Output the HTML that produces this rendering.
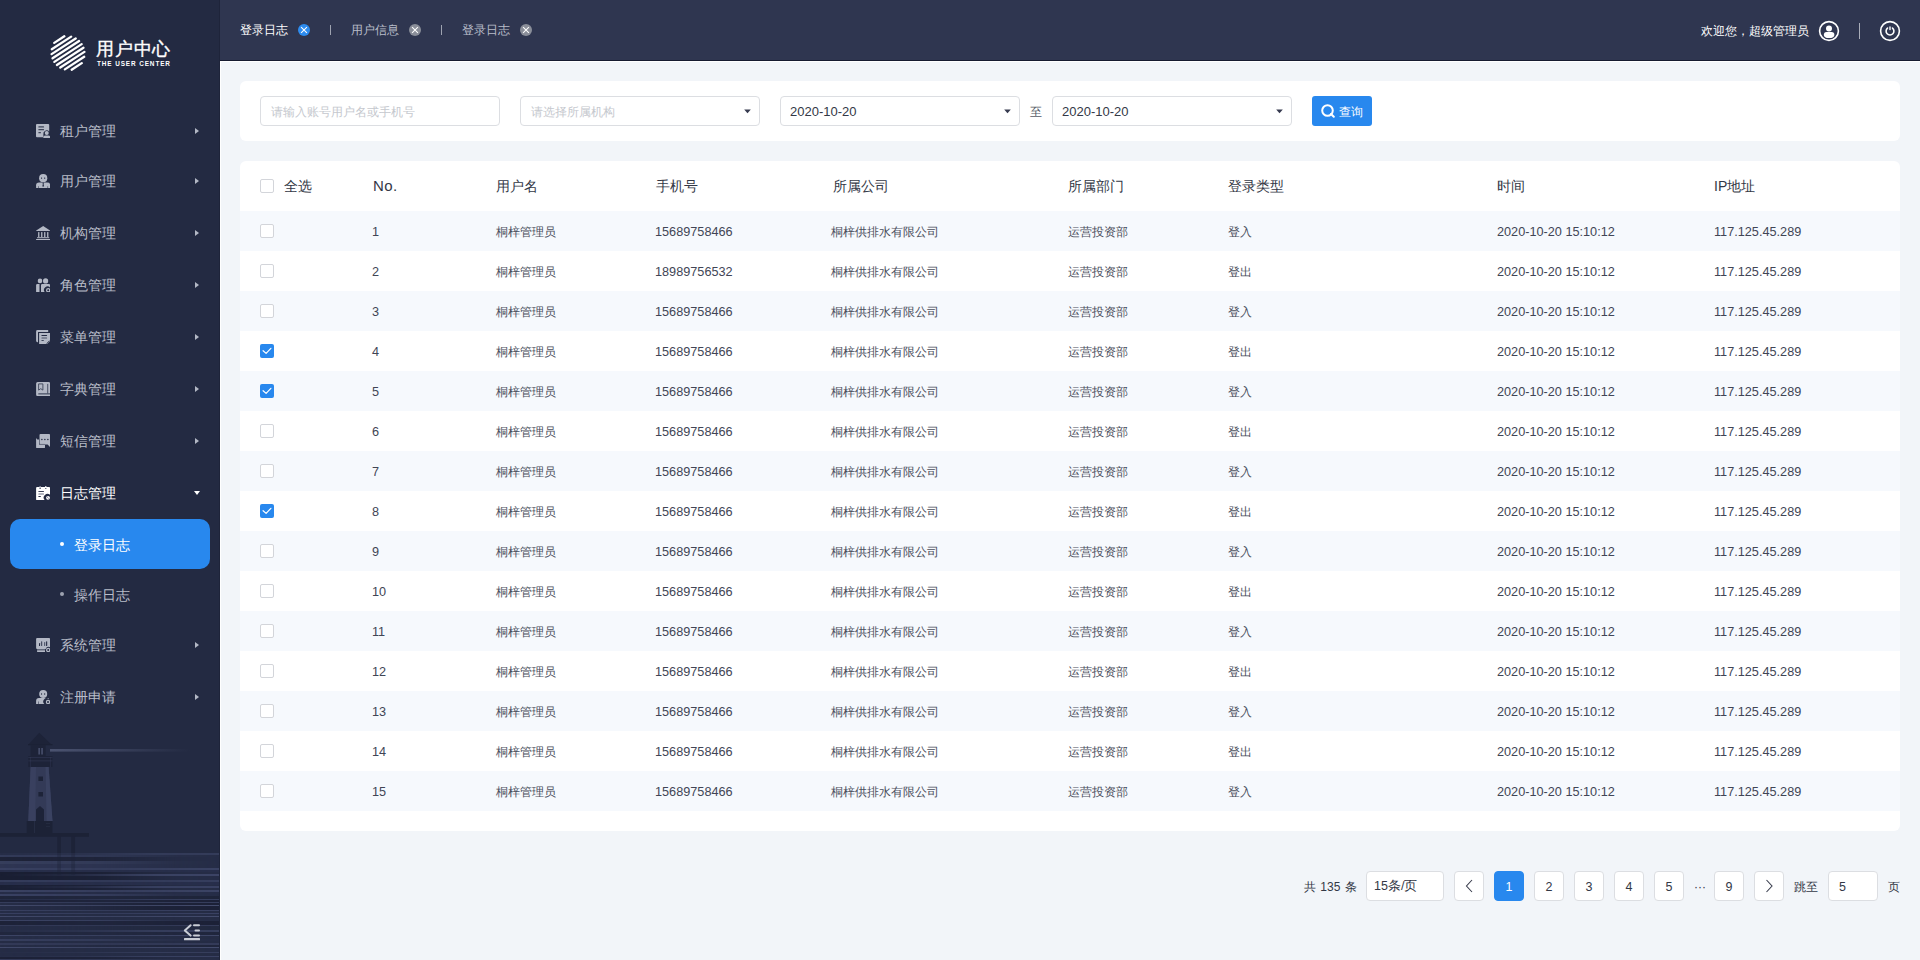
<!DOCTYPE html>
<html lang="zh"><head><meta charset="utf-8"><title>登录日志</title>
<style>
*{box-sizing:border-box;margin:0;padding:0}
html,body{width:1920px;height:960px;overflow:hidden;background:#f2f5f9;font-family:"Liberation Sans", sans-serif;}
.side{position:absolute;left:0;top:0;width:220px;height:960px;background:#232a42;overflow:hidden;border-right:1px solid #1e243a}
.lt{position:absolute;left:96px;top:37px;-webkit-text-stroke:0.35px #fff;font-size:18.2px;letter-spacing:.8px;line-height:24px;color:#fff;white-space:nowrap}
.ls{position:absolute;left:97px;top:60px;font-size:6.4px;line-height:8px;color:#fff;font-weight:bold;letter-spacing:0.9px;white-space:nowrap}
.mi{position:absolute;left:0;width:220px;height:40px}
.mi .ic{position:absolute;left:36px;top:13px;width:14px;height:14px;display:block}
.mi .ic svg{display:block}
.mi .mt{position:absolute;left:60px;top:0;line-height:40px;font-size:14px;color:#b9bdc9;white-space:nowrap}
.mi.act .mt{color:#fff}
.arr{position:absolute;left:195px;top:16.5px;width:0;height:0;border-top:3.5px solid transparent;border-bottom:3.5px solid transparent;border-left:4px solid #b3b8c5}
.arr.down{left:194px;top:18px;border-left:3.5px solid transparent;border-right:3.5px solid transparent;border-top:4px solid #fff;border-bottom:0}
.subact{position:absolute;left:10px;top:519px;width:200px;height:50px;border-radius:10px;background:#2888ee}
.sub{position:absolute;left:10px;top:569px;width:200px;height:50px}
.dot{position:absolute;left:50px;top:23px;width:4px;height:4px;border-radius:50%;background:#fff}
.sub .dot{background:#9da2b0}
.st{position:absolute;left:64px;top:1px;line-height:50px;font-size:14px;color:#fff;white-space:nowrap}
.sub .st{color:#b9bdc9}
.hdr{position:absolute;left:220px;top:0;width:1700px;height:61px;background:#2f3650;border-bottom:1px solid #161b30}
.tab{position:absolute;top:0;height:60px}
.tt{position:absolute;left:0;top:0;line-height:60px;font-size:12px;color:#b9bdc9;white-space:nowrap}
.tab.act .tt{color:#fff}
.tc{position:absolute;left:58px;top:24px;width:12px;height:12px}
.tc svg{display:block}
.tsep{position:absolute;top:25px;width:1px;height:10px;background:#9ea3b0}
.welcome{position:absolute;left:1481px;top:1px;line-height:60px;font-size:12px;color:#fff;white-space:nowrap}
.hsep{position:absolute;left:1639px;top:23px;width:1px;height:16px;background:#a9adb9}
.content-line{position:absolute;left:220px;top:61px;width:1px;height:899px;background:#fff}
.content-line2{position:absolute;left:220px;top:61px;width:1700px;height:1px;background:#fff}
.card{position:absolute;background:#fff;border-radius:6px}
.sc{left:240px;top:81px;width:1660px;height:60px}
.inp{position:absolute;top:15px;width:240px;height:30px;border:1px solid #dcdee2;border-radius:4px;background:#fff}
.ph{position:absolute;left:10px;top:1px;line-height:28px;font-size:12px;color:#c5c8ce;white-space:nowrap}
.val{position:absolute;left:9px;top:1px;line-height:28px;font-size:13px;color:#333846;white-space:nowrap}
.dd{position:absolute;left:223px;top:12.4px;width:7px;height:5px}
.dd svg{display:block}
.zhi{position:absolute;left:790px;top:16px;line-height:30px;font-size:12px;color:#555a66}
.btn{position:absolute;left:1072px;top:15px;width:60px;height:30px;border-radius:3px;background:#2888ee;color:#fff;font-size:12px}
.btn svg{position:absolute;left:9px;top:8px}
.btn span{position:absolute;left:27px;top:1px;line-height:30px}
.tb{left:240px;top:161px;width:1660px;height:670px;overflow:hidden}
.thr{position:absolute;left:0;top:0;width:1660px;height:50px}
.th{position:absolute;top:0;line-height:50px;font-size:14px;color:#333846;white-space:nowrap}
.th.no{font-size:15px;letter-spacing:.4px}
.tr{position:absolute;left:0;width:1660px;height:40px;background:#fff}
.tr.odd{background:#f6f9fd}
.td{position:absolute;top:1px;line-height:40px;font-size:12px;color:#4a4e5c;white-space:nowrap}
.td.n{font-size:12.7px;color:#414555}
.cb{position:absolute;left:20px;width:14px;height:14px;border:1px solid #d3d5da;border-radius:2px;background:#fff}
.thr .cb{top:18px}
.tr .cb{top:13px}
.cb.on{border:0;background:transparent}
.cb svg{display:block}
.ptxt{position:absolute;top:872px;word-spacing:1px;line-height:30px;font-size:12px;color:#333846;white-space:nowrap}
.pbox{position:absolute;top:871px;width:30px;height:30px;border:1px solid #dcdee2;border-radius:4px;background:#fff;font-size:12.5px;color:#333846;line-height:30px}
.pbtn{text-align:center}
.pbtn svg{display:inline-block;vertical-align:middle;margin-top:-3px}
.pbox.cur{background:#2888ee;border-color:#2888ee;color:#fff}
</style></head>
<body>

<div class="side">
  <div class="logo">
    <svg width="36" height="36" viewBox="0 0 36 36" style="position:absolute;left:50px;top:35px">
      <g stroke="#fff" stroke-width="2.3" stroke-linecap="round"><line x1="4.23" y1="7.87" x2="14.34" y2="1.30"/><line x1="1.76" y1="14.24" x2="21.17" y2="1.63"/><line x1="1.59" y1="19.12" x2="25.70" y2="3.46"/><line x1="2.54" y1="23.27" x2="29.11" y2="6.02"/><line x1="4.33" y1="26.88" x2="31.67" y2="9.12"/><line x1="6.89" y1="29.98" x2="33.46" y2="12.73"/><line x1="10.30" y1="32.54" x2="34.41" y2="16.88"/><line x1="14.83" y1="34.37" x2="34.24" y2="21.76"/><line x1="21.66" y1="34.70" x2="31.77" y2="28.13"/></g>
    </svg>
    <div class="lt">用户中心</div>
    <div class="ls">THE USER CENTER</div>
  </div>
  <div class="mi" style="top:111px"><span class="ic"><svg width="14" height="14" viewBox="0 0 14 14"><path d="M1 0 H12.2 Q13.2 0 13.2 1 V7.6 A3.3 3.3 0 0 0 7.4 10.3 V13.2 H1 Q0 13.2 0 12.2 V1 Q0 0 1 0Z" fill="#b3b8c5"/><rect x="2.3" y="2.3" width="5.8" height="1.2" rx=".6" fill="#3d4459"/><rect x="2.3" y="5.1" width="5.8" height="1.2" rx=".6" fill="#3d4459"/><rect x="2.3" y="8.1" width="2.7" height="1.2" rx=".6" fill="#3d4459"/><circle cx="10.75" cy="9" r="2" fill="#b3b8c5"/><path d="M7.3 14.2 V13.2 Q7.3 11.6 9 11.6 H12.5 Q14.2 11.6 14.2 13.2 V14.2Z" fill="#b3b8c5"/></svg></span><span class="mt">租户管理</span><span class="arr"></span></div><div class="mi" style="top:161px"><span class="ic"><svg width="14" height="14" viewBox="0 0 14 14"><circle cx="7.2" cy="4.2" r="4.1" fill="#b3b8c5"/><ellipse cx="5.6" cy="4.2" rx=".55" ry=".9" fill="#3d4459"/><ellipse cx="8.7" cy="4.2" rx=".55" ry=".9" fill="#3d4459"/><path d="M0.1 14.2 V11.3 Q0.1 8.6 3 8.6 H11.3 Q14.2 8.6 14.2 11.3 V14.2Z" fill="#b3b8c5"/><path d="M6.5 8.6 H7.9 L7.6 10.2 L8.1 12.6 H6.3 L6.8 10.2Z" fill="#232a42"/><rect x="2.4" y="12.2" width=".6" height="2" fill="#3d4459"/><rect x="11.5" y="12.2" width=".6" height="2" fill="#3d4459"/></svg></span><span class="mt">用户管理</span><span class="arr"></span></div><div class="mi" style="top:213px"><span class="ic"><svg width="14" height="14" viewBox="0 0 14 14"><path d="M7.2 0.1 L14.2 4.6 V5.1 H0.2 V4.6 Z" fill="#b3b8c5"/><rect x="2.1" y="6.1" width="1.3" height="5" fill="#b3b8c5"/><rect x="5.1" y="6.1" width="1.3" height="5" fill="#b3b8c5"/><rect x="8.1" y="6.1" width="1.3" height="5" fill="#b3b8c5"/><rect x="11.1" y="6.1" width="1.3" height="5" fill="#b3b8c5"/><rect x="1.1" y="11.2" width="12.1" height="1" fill="#b3b8c5"/><rect x="0.1" y="13" width="14.1" height="1.2" fill="#b3b8c5"/></svg></span><span class="mt">机构管理</span><span class="arr"></span></div><div class="mi" style="top:265px"><span class="ic"><svg width="14" height="14" viewBox="0 0 14 14"><circle cx="4" cy="2.9" r="2.3" fill="#b3b8c5"/><circle cx="9.6" cy="2.9" r="3" fill="#232a42"/><circle cx="9.6" cy="2.9" r="2.6" fill="#b3b8c5"/><path d="M0.1 14.2 V7.3 Q0.1 6.1 1.3 6.1 H3.5 V14.2Z" fill="#b3b8c5"/><path d="M5 14.2 V7.3 Q5 6.1 6.2 6.1 H13 Q14.2 6.1 14.2 7.3 V9.8 A3.4 3.4 0 0 0 8.8 14.2Z" fill="#b3b8c5"/><circle cx="12.2" cy="12.2" r="1.6" fill="none" stroke="#b3b8c5" stroke-width="1.2"/></svg></span><span class="mt">角色管理</span><span class="arr"></span></div><div class="mi" style="top:317px"><span class="ic"><svg width="14" height="14" viewBox="0 0 14 14"><path d="M1.5 0.1 H12.2 V1.9 H2 V12.2 H1.5 Q0.1 12.2 0.1 10.8 V1.5 Q0.1 0.1 1.5 0.1Z" fill="#b3b8c5"/><path d="M3.1 3.1 H14.2 V10.8 L10.8 14.2 H3.1Z" fill="#b3b8c5"/><rect x="5.4" y="5.1" width="5.7" height="1" rx=".5" fill="#232a42"/><rect x="5.4" y="7.6" width="5.7" height="1" rx=".5" fill="#4a5166"/><rect x="5.4" y="10.1" width="2.5" height="1" rx=".5" fill="#3d4459"/><path d="M10.6 13.6 L13.6 10.6" stroke="#3d4459" stroke-width="1"/></svg></span><span class="mt">菜单管理</span><span class="arr"></span></div><div class="mi" style="top:369px"><span class="ic"><svg width="14" height="14" viewBox="0 0 14 14"><path d="M1.6 0.1 H12.6 Q14.2 0.1 14.2 1.7 V14.2 H1.6 Q0.1 14.2 0.1 12.6 V1.6 Q0.1 0.1 1.6 0.1Z" fill="#b3b8c5"/><path d="M2.6 1.9 H6.9 V8.1 L4.75 6.7 L2.6 8.1Z" fill="none" stroke="#3d4459" stroke-width=".9"/><rect x="11.3" y="1.9" width=".9" height="10" fill="#3d4459"/><rect x="2.3" y="11.2" width="11.9" height="1.3" fill="#4d5468"/></svg></span><span class="mt">字典管理</span><span class="arr"></span></div><div class="mi" style="top:421px"><span class="ic"><svg width="14" height="14" viewBox="0 0 14 14"><path d="M0.1 4 L1.3 5.4 H3 V10 Q3 10.8 3.8 10.8 H9 V13.2 Q9 14.2 8 14.2 H1.1 Q0.1 14.2 0.1 13.2Z" fill="#b3b8c5"/><path d="M4.5 0.1 H13.2 Q14.2 0.1 14.2 1.1 V13.2 L11.6 10.4 H4.5 Q3.5 10.4 3.5 9.4 V1.1 Q3.5 0.1 4.5 0.1Z" fill="#b3b8c5"/><path d="M3.5 9.4 Q3.5 10.4 4.5 10.4 H9" fill="none" stroke="#5a6175" stroke-width=".6"/><circle cx="5.9" cy="5.6" r=".75" fill="#232a42"/><circle cx="8.9" cy="5.6" r=".75" fill="#232a42"/><circle cx="11.9" cy="5.6" r=".75" fill="#232a42"/></svg></span><span class="mt">短信管理</span><span class="arr"></span></div><div class="mi act" style="top:473px"><span class="ic"><svg width="14" height="14" viewBox="0 0 14 14"><path d="M1.1 1.1 H13.2 Q14.2 1.1 14.2 2.1 V9 A3.4 3.4 0 0 0 8.8 14.2 H1.1 Q0.1 14.2 0.1 13.2 V2.1 Q0.1 1.1 1.1 1.1Z" fill="#fff"/><rect x="3.5" y="0" width="1.3" height="2.8" rx=".6" fill="#b0b4c0"/><rect x="9.1" y="0" width="1.3" height="2.8" rx=".6" fill="#fff"/><rect x="3.5" y="2.2" width="1.3" height=".8" fill="#3d4459"/><rect x="9.1" y="2.2" width="1.3" height=".8" fill="#3d4459"/><rect x="2.3" y="5.1" width="5.7" height="1" rx=".5" fill="#3d4459"/><rect x="2.3" y="7.6" width="5.7" height="1" rx=".5" fill="#6a7083"/><rect x="2.3" y="10.1" width="2.6" height="1" rx=".5" fill="#232a42"/><circle cx="12" cy="11.8" r="1.9" fill="#fff"/><path d="M11.2 11 L12.6 12.4" stroke="#3d4459" stroke-width=".8"/></svg></span><span class="mt">日志管理</span><span class="arr down"></span></div><div class="mi" style="top:625px"><span class="ic"><svg width="14" height="14" viewBox="0 0 14 14"><path d="M1.1 0.1 H13.2 Q14.2 0.1 14.2 1.1 V9.3 A3.4 3.4 0 0 0 9.6 11.1 H1.1 Q0.1 11.1 0.1 10.1 V1.1 Q0.1 0.1 1.1 0.1Z" fill="#b3b8c5"/><rect x="3" y="5.1" width="1.1" height="3" rx=".5" fill="#232a42"/><rect x="5.1" y="3.3" width="1.1" height="4.8" rx=".5" fill="#3d4459"/><rect x="8.1" y="4.1" width="1.1" height="4" rx=".5" fill="#4d5468"/><rect x="10.1" y="3.3" width="1.1" height="4.8" rx=".5" fill="#232a42"/><rect x="1.1" y="12.2" width="7.9" height="2" fill="#b3b8c5"/><rect x="1.1" y="11.1" width="8" height="1.1" fill="#6a7083"/><circle cx="12.2" cy="12" r="1.6" fill="none" stroke="#b3b8c5" stroke-width="1.2"/></svg></span><span class="mt">系统管理</span><span class="arr"></span></div><div class="mi" style="top:677px"><span class="ic"><svg width="14" height="14" viewBox="0 0 14 14"><circle cx="7.2" cy="4" r="4" fill="#b3b8c5"/><ellipse cx="5.6" cy="4" rx=".55" ry=".9" fill="#3d4459"/><ellipse cx="8.7" cy="4" rx=".55" ry=".9" fill="#3d4459"/><path d="M0.1 14.2 V11 Q0.1 8.1 3 8.1 H12.7 V9 A3.3 3.3 0 0 0 8.6 14.2Z" fill="#b3b8c5"/><rect x="2.3" y="11.5" width=".6" height="2.7" fill="#3d4459"/><circle cx="12" cy="12" r="1.6" fill="none" stroke="#b3b8c5" stroke-width="1.2"/></svg></span><span class="mt">注册申请</span><span class="arr"></span></div>
  <div class="subact"><span class="dot"></span><span class="st">登录日志</span></div>
  <div class="sub"><span class="dot"></span><span class="st">操作日志</span></div>
  <svg class="scene" width="220" height="240" viewBox="0 0 220 240" style="position:absolute;left:0;top:720px">
    <defs>
      <linearGradient id="beam" x1="0" x2="1"><stop offset="0" stop-color="#4b5370" stop-opacity="1"/><stop offset="1" stop-color="#4b5370" stop-opacity="0"/></linearGradient>
      <linearGradient id="lgL" x1="0" x2="1"><stop offset="0" stop-color="#fff" stop-opacity="1"/><stop offset=".45" stop-color="#fff" stop-opacity=".8"/><stop offset=".8" stop-color="#fff" stop-opacity=".1"/><stop offset="1" stop-color="#fff" stop-opacity="0"/></linearGradient>
      <linearGradient id="lgR" x1="0" x2="1"><stop offset="0" stop-color="#fff" stop-opacity="0"/><stop offset=".35" stop-color="#fff" stop-opacity=".3"/><stop offset=".7" stop-color="#fff" stop-opacity=".9"/><stop offset="1" stop-color="#fff" stop-opacity="1"/></linearGradient>
      <linearGradient id="lgF" x1="0" x2="1"><stop offset="0" stop-color="#fff" stop-opacity=".9"/><stop offset=".5" stop-color="#fff" stop-opacity=".7"/><stop offset="1" stop-color="#fff" stop-opacity="1"/></linearGradient>
      <mask id="gL" maskUnits="userSpaceOnUse" x="0" y="0" width="220" height="240"><rect x="0" y="0" width="220" height="240" fill="url(#lgL)"/></mask>
      <mask id="gR" maskUnits="userSpaceOnUse" x="0" y="0" width="220" height="240"><rect x="0" y="0" width="220" height="240" fill="url(#lgR)"/></mask>
      <mask id="gF" maskUnits="userSpaceOnUse" x="0" y="0" width="220" height="240"><rect x="0" y="0" width="220" height="240" fill="url(#lgF)"/></mask>
    </defs>
    <rect x="50" y="29" width="140" height="2.6" fill="url(#beam)"/>
    <path d="M39.2 12.8 L28.8 24.2 H51.2Z" fill="#1d2338"/>
    <rect x="28" y="24" width="24.5" height="1.3" fill="#1b2135"/>
    <rect x="30.6" y="25" width="15" height="11.5" fill="#1d2338"/>
    <rect x="38.4" y="28" width="1.5" height="6.5" fill="#4b5370"/><rect x="41.3" y="28" width="1.5" height="6.5" fill="#4b5370"/>
    <rect x="28.3" y="36" width="24.2" height="11" fill="#1d2338"/>
    <rect x="28.3" y="37" width="24.2" height=".8" fill="#3a4260" opacity=".55"/>
    <rect x="28.3" y="40.5" width="24.2" height=".8" fill="#3a4260" opacity=".55"/>
    <rect x="30" y="37" width=".8" height="10" fill="#3a4260" opacity=".4"/><rect x="50" y="37" width=".8" height="10" fill="#3a4260" opacity=".4"/>
    <path d="M30.6 47 H48.6 L52.5 101 H28.3Z" fill="#333a57"/>
    <path d="M30.6 47 H36 L35.2 101 H28.3Z" fill="#39405f"/>
    <path d="M45.5 47 H48.6 L52.5 101 H46.6Z" fill="#3a4261"/>
    <rect x="38.4" y="56.5" width="4.6" height="4.5" fill="#1d2338"/>
    <rect x="38.4" y="72" width="4.6" height="4.5" fill="#1d2338"/>
    <path d="M36 101 V89.5 L40 86 L44 89.5 V101Z" fill="#1d2338"/>
    <rect x="26.7" y="101" width="25.8" height="12" fill="#1c2236"/>
    <rect x="34" y="101" width="1" height="12" fill="#2a3048" opacity=".7"/><rect x="46" y="103" width="4" height=".8" fill="#2a3048" opacity=".7"/><rect x="46" y="106" width="4" height=".8" fill="#2a3048" opacity=".7"/>
    <rect x="0" y="113" width="89" height="3.7" fill="#1c2236"/>
    <rect x="0" y="133" width="220" height="107" fill="#262d47"/>
    <rect x="0" y="133" width="220" height="2" fill="#343c5a" mask="url(#gR)"/><rect x="0" y="135" width="220" height="2" fill="#323a58" mask="url(#gL)"/><rect x="0" y="137" width="220" height="4" fill="#1d2237" mask="url(#gL)"/><rect x="0" y="141" width="220" height="3" fill="#363e5c" mask="url(#gL)"/><rect x="0" y="144" width="220" height="4" fill="#2e3553" mask="url(#gL)"/><rect x="0" y="148" width="220" height="2" fill="#3a4263" mask="url(#gF)"/><rect x="0" y="150" width="220" height="2" fill="#272e4a" mask="url(#gF)"/><rect x="0" y="152" width="220" height="8" fill="#191e32" mask="url(#gL)"/><rect x="0" y="154" width="220" height="2" fill="#3c4465" mask="url(#gR)"/><rect x="0" y="160" width="220" height="2" fill="#363e5e" mask="url(#gF)"/><rect x="0" y="162" width="220" height="3" fill="#272e4b" mask="url(#gF)"/><rect x="0" y="165" width="220" height="5" fill="#1a1f34" mask="url(#gL)"/><rect x="0" y="166" width="220" height="2" fill="#394162" mask="url(#gR)"/><rect x="0" y="170" width="220" height="2" fill="#3c4465" mask="url(#gF)"/><rect x="0" y="172" width="220" height="2" fill="#262d48" mask="url(#gF)"/><rect x="0" y="174" width="220" height="2" fill="#394162" mask="url(#gL)"/><rect x="0" y="176" width="220" height="3" fill="#1e2439" mask="url(#gF)"/><rect x="0" y="179" width="220" height="1" fill="#363e5d" mask="url(#gR)"/><rect x="0" y="180" width="220" height="2" fill="#1c2137" mask="url(#gF)"/><rect x="0" y="182" width="220" height="1" fill="#363e5d" mask="url(#gF)"/><rect x="0" y="183" width="220" height="2" fill="#1c2137" mask="url(#gR)"/><rect x="0" y="185" width="220" height="1" fill="#444c6d" mask="url(#gF)"/><rect x="0" y="186" width="220" height="4" fill="#1c2137" mask="url(#gR)"/><rect x="0" y="190" width="220" height="1" fill="#3a4263" mask="url(#gF)"/><rect x="0" y="191" width="220" height="2" fill="#252c45" mask="url(#gR)"/><rect x="0" y="193" width="220" height="1" fill="#3a4263" mask="url(#gF)"/><rect x="0" y="194" width="220" height="2" fill="#252c45" mask="url(#gL)"/><rect x="0" y="196" width="220" height="1" fill="#444c6d" mask="url(#gF)"/><rect x="0" y="197" width="220" height="3" fill="#252c45" mask="url(#gF)"/><rect x="0" y="200" width="220" height="1" fill="#3a4263" mask="url(#gL)"/><rect x="0" y="201" width="220" height="4" fill="#1c2137" mask="url(#gF)"/><rect x="0" y="205" width="220" height="1" fill="#343b59" mask="url(#gF)"/><rect x="0" y="206" width="220" height="4" fill="#222940" mask="url(#gR)"/><rect x="0" y="210" width="220" height="2" fill="#363e5d" mask="url(#gR)"/><rect x="0" y="212" width="220" height="3" fill="#20263d" mask="url(#gF)"/><rect x="0" y="215" width="220" height="1" fill="#3f4768" mask="url(#gF)"/><rect x="0" y="216" width="220" height="3" fill="#252c45" mask="url(#gR)"/><rect x="0" y="219" width="220" height="2" fill="#363e5d" mask="url(#gL)"/><rect x="0" y="221" width="220" height="2" fill="#252c45" mask="url(#gF)"/><rect x="0" y="223" width="220" height="2" fill="#343b59" mask="url(#gF)"/><rect x="0" y="225" width="220" height="2" fill="#20263d" mask="url(#gR)"/><rect x="0" y="227" width="220" height="1" fill="#444c6d" mask="url(#gF)"/><rect x="0" y="228" width="220" height="4" fill="#252c45" mask="url(#gL)"/><rect x="0" y="232" width="220" height="1" fill="#363e5d" mask="url(#gR)"/><rect x="0" y="233" width="220" height="3" fill="#252c45" mask="url(#gF)"/><rect x="0" y="236" width="220" height="1" fill="#3a4263" mask="url(#gR)"/><rect x="0" y="237" width="220" height="2" fill="#1c2137" mask="url(#gL)"/><rect x="0" y="239" width="220" height="2" fill="#343b59" mask="url(#gL)"/>
    <rect x="57.2" y="116.7" width="3.8" height="16.3" fill="#1c2236" opacity=".85"/><rect x="71.25" y="116.7" width="3.8" height="16.3" fill="#1c2236" opacity=".85"/><rect x="57.2" y="133" width="3.8" height="22" fill="#1c2236" opacity=".35"/><rect x="71.25" y="133" width="3.8" height="22" fill="#1c2236" opacity=".35"/>
  </svg>
  <svg width="18" height="18" viewBox="0 0 18 18" style="position:absolute;left:183px;top:923px">
    <path d="M7.6 2.2 L1.8 7.4 L7.6 12.6" stroke="#c9cdd6" stroke-width="2" fill="none" stroke-linecap="round" stroke-linejoin="round"/>
    <rect x="10" y="1.2" width="7" height="2" rx="1" fill="#c9cdd6"/><rect x="11.5" y="6.4" width="5.5" height="2" rx="1" fill="#c9cdd6"/><rect x="10" y="11.6" width="7" height="2" rx="1" fill="#c9cdd6"/>
    <rect x="1" y="15" width="16" height="2.2" rx=".5" fill="#c9cdd6"/>
  </svg>
</div>


<div class="hdr">
  <div class="tab act" style="left:20px"><span class="tt">登录日志</span><span class="tc"><svg width="12" height="12" viewBox="0 0 12 12"><circle cx="6" cy="6" r="6" fill="#2d8cf0"/><path d="M3.1 3.1 L8.9 8.9 M8.9 3.1 L3.1 8.9" stroke="#fff" stroke-width="1.05"/></svg></span></div>
  <div class="tsep" style="left:110px"></div>
  <div class="tab" style="left:131px"><span class="tt">用户信息</span><span class="tc"><svg width="12" height="12" viewBox="0 0 12 12"><circle cx="6" cy="6" r="6" fill="#8a8e99"/><path d="M3.1 3.1 L8.9 8.9 M8.9 3.1 L3.1 8.9" stroke="#fff" stroke-width="1.05"/></svg></span></div>
  <div class="tsep" style="left:221px"></div>
  <div class="tab" style="left:242px"><span class="tt">登录日志</span><span class="tc"><svg width="12" height="12" viewBox="0 0 12 12"><circle cx="6" cy="6" r="6" fill="#8a8e99"/><path d="M3.1 3.1 L8.9 8.9 M8.9 3.1 L3.1 8.9" stroke="#fff" stroke-width="1.05"/></svg></span></div>
  <div class="welcome">欢迎您，超级管理员</div>
  <svg width="22" height="22" viewBox="0 0 22 22" style="position:absolute;left:1598px;top:19.9px">
    <circle cx="11" cy="11" r="9.4" fill="none" stroke="#fff" stroke-width="1.6"/>
    <circle cx="11" cy="8.5" r="3" fill="#fff"/>
    <path d="M5.8 15 Q5.8 12.1 8.5 12.1 H13.7 Q16.4 12.1 16.4 15 Q16.4 18.1 11.1 18.1 Q5.8 18.1 5.8 15Z" fill="#fff"/>
  </svg>
  <div class="hsep"></div>
  <svg width="22" height="22" viewBox="0 0 22 22" style="position:absolute;left:1659px;top:19.9px">
    <circle cx="11" cy="11" r="9.4" fill="none" stroke="#fff" stroke-width="1.6"/>
    <path d="M8.5 8.1 A3.9 3.9 0 1 0 13.5 8.1" fill="none" stroke="#fff" stroke-width="1.6" stroke-linecap="round"/>
    <rect x="10.2" y="6.3" width="1.6" height="3.9" rx=".8" fill="#e6e7ea"/>
  </svg>
</div>

<div class="content-line"></div><div class="content-line2"></div>

<div class="card sc">
  <div class="inp" style="left:20px"><span class="ph">请输入账号用户名或手机号</span></div>
  <div class="inp" style="left:280px"><span class="ph">请选择所属机构</span><span class="dd"><svg width="7" height="5" viewBox="0 0 7 5"><path d="M0.2 0.6 H6.8 L3.5 4.3Z" fill="#363a4f"/></svg></span></div>
  <div class="inp" style="left:540px"><span class="val">2020-10-20</span><span class="dd"><svg width="7" height="5" viewBox="0 0 7 5"><path d="M0.2 0.6 H6.8 L3.5 4.3Z" fill="#363a4f"/></svg></span></div>
  <div class="zhi">至</div>
  <div class="inp" style="left:812px"><span class="val">2020-10-20</span><span class="dd"><svg width="7" height="5" viewBox="0 0 7 5"><path d="M0.2 0.6 H6.8 L3.5 4.3Z" fill="#363a4f"/></svg></span></div>
  <div class="btn"><svg width="14" height="14" viewBox="0 0 14 14"><circle cx="6.5" cy="6.5" r="5.3" fill="none" stroke="#fff" stroke-width="2"/><path d="M10 10 L12.8 12.8" stroke="#fff" stroke-width="2" stroke-linecap="round"/></svg><span>查询</span></div>
</div>


<div class="card tb">
  <div class="thr"><span class="cb"></span><span class="th" style="left:44px">全选</span><span class="th no" style="left:133px">No.</span><span class="th" style="left:256px">用户名</span><span class="th" style="left:416px">手机号</span><span class="th" style="left:593px">所属公司</span><span class="th" style="left:828px">所属部门</span><span class="th" style="left:988px">登录类型</span><span class="th" style="left:1257px">时间</span><span class="th" style="left:1474px">IP地址</span></div>
  <div class="tr odd" style="top:50px"><span class="cb"></span><span class="td n" style="left:132px">1</span><span class="td" style="left:256px">桐梓管理员</span><span class="td n" style="left:415px">15689758466</span><span class="td" style="left:591px">桐梓供排水有限公司</span><span class="td" style="left:828px">运营投资部</span><span class="td" style="left:988px">登入</span><span class="td n" style="left:1257px">2020-10-20 15:10:12</span><span class="td n" style="left:1474px">117.125.45.289</span></div><div class="tr" style="top:90px"><span class="cb"></span><span class="td n" style="left:132px">2</span><span class="td" style="left:256px">桐梓管理员</span><span class="td n" style="left:415px">18989756532</span><span class="td" style="left:591px">桐梓供排水有限公司</span><span class="td" style="left:828px">运营投资部</span><span class="td" style="left:988px">登出</span><span class="td n" style="left:1257px">2020-10-20 15:10:12</span><span class="td n" style="left:1474px">117.125.45.289</span></div><div class="tr odd" style="top:130px"><span class="cb"></span><span class="td n" style="left:132px">3</span><span class="td" style="left:256px">桐梓管理员</span><span class="td n" style="left:415px">15689758466</span><span class="td" style="left:591px">桐梓供排水有限公司</span><span class="td" style="left:828px">运营投资部</span><span class="td" style="left:988px">登入</span><span class="td n" style="left:1257px">2020-10-20 15:10:12</span><span class="td n" style="left:1474px">117.125.45.289</span></div><div class="tr" style="top:170px"><span class="cb on"><svg width="14" height="14" viewBox="0 0 14 14"><rect x="0" y="0" width="14" height="14" rx="2" fill="#2888ee"/><path d="M3.1 6.7 L6.1 9.4 L10.9 4.3" stroke="#fff" stroke-width="1.2" fill="none" stroke-linecap="round" stroke-linejoin="round"/></svg></span><span class="td n" style="left:132px">4</span><span class="td" style="left:256px">桐梓管理员</span><span class="td n" style="left:415px">15689758466</span><span class="td" style="left:591px">桐梓供排水有限公司</span><span class="td" style="left:828px">运营投资部</span><span class="td" style="left:988px">登出</span><span class="td n" style="left:1257px">2020-10-20 15:10:12</span><span class="td n" style="left:1474px">117.125.45.289</span></div><div class="tr odd" style="top:210px"><span class="cb on"><svg width="14" height="14" viewBox="0 0 14 14"><rect x="0" y="0" width="14" height="14" rx="2" fill="#2888ee"/><path d="M3.1 6.7 L6.1 9.4 L10.9 4.3" stroke="#fff" stroke-width="1.2" fill="none" stroke-linecap="round" stroke-linejoin="round"/></svg></span><span class="td n" style="left:132px">5</span><span class="td" style="left:256px">桐梓管理员</span><span class="td n" style="left:415px">15689758466</span><span class="td" style="left:591px">桐梓供排水有限公司</span><span class="td" style="left:828px">运营投资部</span><span class="td" style="left:988px">登入</span><span class="td n" style="left:1257px">2020-10-20 15:10:12</span><span class="td n" style="left:1474px">117.125.45.289</span></div><div class="tr" style="top:250px"><span class="cb"></span><span class="td n" style="left:132px">6</span><span class="td" style="left:256px">桐梓管理员</span><span class="td n" style="left:415px">15689758466</span><span class="td" style="left:591px">桐梓供排水有限公司</span><span class="td" style="left:828px">运营投资部</span><span class="td" style="left:988px">登出</span><span class="td n" style="left:1257px">2020-10-20 15:10:12</span><span class="td n" style="left:1474px">117.125.45.289</span></div><div class="tr odd" style="top:290px"><span class="cb"></span><span class="td n" style="left:132px">7</span><span class="td" style="left:256px">桐梓管理员</span><span class="td n" style="left:415px">15689758466</span><span class="td" style="left:591px">桐梓供排水有限公司</span><span class="td" style="left:828px">运营投资部</span><span class="td" style="left:988px">登入</span><span class="td n" style="left:1257px">2020-10-20 15:10:12</span><span class="td n" style="left:1474px">117.125.45.289</span></div><div class="tr" style="top:330px"><span class="cb on"><svg width="14" height="14" viewBox="0 0 14 14"><rect x="0" y="0" width="14" height="14" rx="2" fill="#2888ee"/><path d="M3.1 6.7 L6.1 9.4 L10.9 4.3" stroke="#fff" stroke-width="1.2" fill="none" stroke-linecap="round" stroke-linejoin="round"/></svg></span><span class="td n" style="left:132px">8</span><span class="td" style="left:256px">桐梓管理员</span><span class="td n" style="left:415px">15689758466</span><span class="td" style="left:591px">桐梓供排水有限公司</span><span class="td" style="left:828px">运营投资部</span><span class="td" style="left:988px">登出</span><span class="td n" style="left:1257px">2020-10-20 15:10:12</span><span class="td n" style="left:1474px">117.125.45.289</span></div><div class="tr odd" style="top:370px"><span class="cb"></span><span class="td n" style="left:132px">9</span><span class="td" style="left:256px">桐梓管理员</span><span class="td n" style="left:415px">15689758466</span><span class="td" style="left:591px">桐梓供排水有限公司</span><span class="td" style="left:828px">运营投资部</span><span class="td" style="left:988px">登入</span><span class="td n" style="left:1257px">2020-10-20 15:10:12</span><span class="td n" style="left:1474px">117.125.45.289</span></div><div class="tr" style="top:410px"><span class="cb"></span><span class="td n" style="left:132px">10</span><span class="td" style="left:256px">桐梓管理员</span><span class="td n" style="left:415px">15689758466</span><span class="td" style="left:591px">桐梓供排水有限公司</span><span class="td" style="left:828px">运营投资部</span><span class="td" style="left:988px">登出</span><span class="td n" style="left:1257px">2020-10-20 15:10:12</span><span class="td n" style="left:1474px">117.125.45.289</span></div><div class="tr odd" style="top:450px"><span class="cb"></span><span class="td n" style="left:132px">11</span><span class="td" style="left:256px">桐梓管理员</span><span class="td n" style="left:415px">15689758466</span><span class="td" style="left:591px">桐梓供排水有限公司</span><span class="td" style="left:828px">运营投资部</span><span class="td" style="left:988px">登入</span><span class="td n" style="left:1257px">2020-10-20 15:10:12</span><span class="td n" style="left:1474px">117.125.45.289</span></div><div class="tr" style="top:490px"><span class="cb"></span><span class="td n" style="left:132px">12</span><span class="td" style="left:256px">桐梓管理员</span><span class="td n" style="left:415px">15689758466</span><span class="td" style="left:591px">桐梓供排水有限公司</span><span class="td" style="left:828px">运营投资部</span><span class="td" style="left:988px">登出</span><span class="td n" style="left:1257px">2020-10-20 15:10:12</span><span class="td n" style="left:1474px">117.125.45.289</span></div><div class="tr odd" style="top:530px"><span class="cb"></span><span class="td n" style="left:132px">13</span><span class="td" style="left:256px">桐梓管理员</span><span class="td n" style="left:415px">15689758466</span><span class="td" style="left:591px">桐梓供排水有限公司</span><span class="td" style="left:828px">运营投资部</span><span class="td" style="left:988px">登入</span><span class="td n" style="left:1257px">2020-10-20 15:10:12</span><span class="td n" style="left:1474px">117.125.45.289</span></div><div class="tr" style="top:570px"><span class="cb"></span><span class="td n" style="left:132px">14</span><span class="td" style="left:256px">桐梓管理员</span><span class="td n" style="left:415px">15689758466</span><span class="td" style="left:591px">桐梓供排水有限公司</span><span class="td" style="left:828px">运营投资部</span><span class="td" style="left:988px">登出</span><span class="td n" style="left:1257px">2020-10-20 15:10:12</span><span class="td n" style="left:1474px">117.125.45.289</span></div><div class="tr odd" style="top:610px"><span class="cb"></span><span class="td n" style="left:132px">15</span><span class="td" style="left:256px">桐梓管理员</span><span class="td n" style="left:415px">15689758466</span><span class="td" style="left:591px">桐梓供排水有限公司</span><span class="td" style="left:828px">运营投资部</span><span class="td" style="left:988px">登入</span><span class="td n" style="left:1257px">2020-10-20 15:10:12</span><span class="td n" style="left:1474px">117.125.45.289</span></div>
</div>


<div class="pg">
  <span class="ptxt" style="left:1304px">共 135 条</span>
  <div class="pbox" style="left:1366px;width:78px"><span style="position:absolute;left:7px;top:-1px">15条/页</span></div>
  <div class="pbox pbtn" style="left:1454px"><svg width="10" height="14" viewBox="0 0 10 14"><path d="M8 1 L2.5 7 L8 13" fill="none" stroke="#3a3e4e" stroke-width="1.1"/></svg></div>
  <div class="pbox pbtn cur" style="left:1494px">1</div>
  <div class="pbox pbtn" style="left:1534px">2</div>
  <div class="pbox pbtn" style="left:1574px">3</div>
  <div class="pbox pbtn" style="left:1614px">4</div>
  <div class="pbox pbtn" style="left:1654px">5</div>
  <span class="ptxt" style="left:1694px">···</span>
  <div class="pbox pbtn" style="left:1714px">9</div>
  <div class="pbox pbtn" style="left:1754px"><svg width="10" height="14" viewBox="0 0 10 14"><path d="M2.5 1 L8 7 L2.5 13" fill="none" stroke="#3a3e4e" stroke-width="1.1"/></svg></div>
  <span class="ptxt" style="left:1794px">跳至</span>
  <div class="pbox" style="left:1828px;width:50px"><span style="position:absolute;left:10px;top:0">5</span></div>
  <span class="ptxt" style="left:1888px">页</span>
</div>

</body></html>
